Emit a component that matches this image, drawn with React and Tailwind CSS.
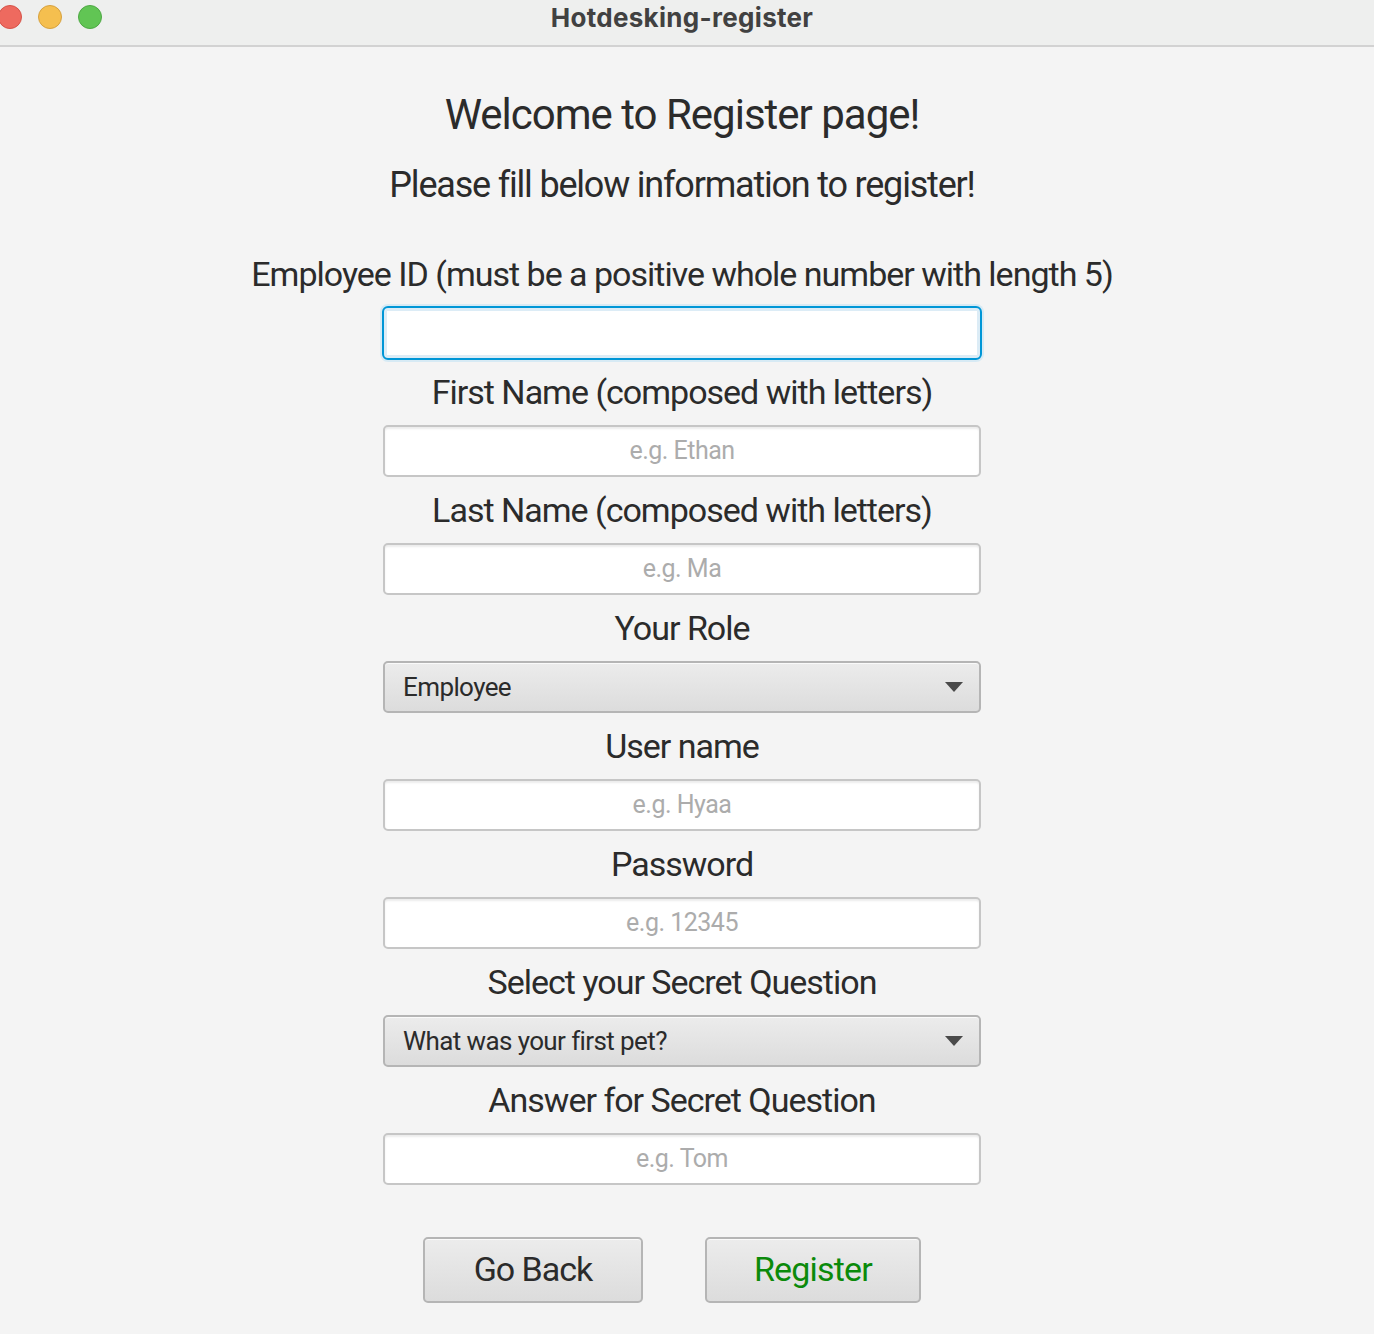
import React from "react";

const fields = [
  { label: "Employee ID (must be a positive whole number with length 5)", type: "input", focused: true },
  { label: "First Name (composed with letters)", type: "input", placeholder: "e.g. Ethan" },
  { label: "Last Name (composed with letters)", type: "input", placeholder: "e.g. Ma" },
  { label: "Your Role", type: "select", value: "Employee" },
  { label: "User name", type: "input", placeholder: "e.g. Hyaa" },
  { label: "Password", type: "input", placeholder: "e.g. 12345" },
  { label: "Select your Secret Question", type: "select", value: "What was your first pet?" },
  { label: "Answer for Secret Question", type: "input", placeholder: "e.g. Tom" },
];

const Field = ({ field }) => {
  if (field.type === "select") {
    return (
      <div className="w-[598px] h-[52px] flex items-center justify-between pl-[18px] pr-[16px] rounded-[5px] border-2 border-[#b5b5b5] bg-gradient-to-b from-[#ececec] to-[#dcdcdc] shadow-[inset_0_1px_0_#fafafa]">
        <span className="text-[26px] text-[#2b2b2b] tracking-[-0.6px]">{field.value}</span>
        <svg width="18" height="10" viewBox="0 0 18 10">
          <path d="M0 0 L18 0 L9 10 Z" fill="#4a4a4a" />
        </svg>
      </div>
    );
  }
  if (field.focused) {
    return (
      <div className="w-[600px] h-[54px] -my-[1px] rounded-[6px] border-2 border-[#0096d6] p-[3px] bg-[#dcecf6] shadow-[0_0_0_2px_#d7eaf4]">
        <div className="w-full h-full bg-white" />
      </div>
    );
  }
  return (
    <div className="w-[598px] h-[52px] flex items-center justify-center rounded-[5px] border-2 border-[#c6c6c6] bg-white shadow-[inset_0_2px_2px_#ececec]">
      <span className="text-[25px] text-[#acacac] tracking-[-0.5px] -mt-[1px]">{field.placeholder}</span>
    </div>
  );
};

const App = () => {
  return (
    <div className="w-[1374px] h-[1334px] bg-[#f4f4f4] font-['Roboto','Liberation_Sans',sans-serif] overflow-hidden">
      {/* title bar */}
      <div className="relative h-[47px] bg-[#eeefee] border-b-2 border-[#d2d2d2] flex items-center justify-center pr-[10px]">
        <div className="absolute left-[-2px] top-[5px] flex gap-[16px]">
          <div className="w-[24px] h-[24px] rounded-full bg-[#ee6a5f] border border-[#d65348]" />
          <div className="w-[24px] h-[24px] rounded-full bg-[#f5bf4f] border border-[#d6a13f]" />
          <div className="w-[24px] h-[24px] rounded-full bg-[#61c554] border border-[#4ea844]" />
        </div>
        <span className="text-[26px] font-bold text-[#414141] tracking-[0.3px] -mt-[10px] font-['Inter','Liberation_Sans',sans-serif]">
          Hotdesking-register
        </span>
      </div>

      <div className="flex flex-col items-center pr-[10px]">
        <h1 className="mt-[42px] h-[52px] text-[42px] leading-[52px] text-[#2b2b2b] tracking-[-1px]">
          Welcome to Register page!
        </h1>
        <p className="mt-[24px] h-[40px] text-[36px] leading-[40px] text-[#2b2b2b] tracking-[-1.2px]">
          Please fill below information to register!
        </p>

        <div className="mt-[36px] flex flex-col items-center">
          {fields.map((f, i) => (
            <div key={i} className="flex flex-col items-center">
              <div className="h-[66px] flex items-center text-[34px] text-[#2b2b2b] tracking-[-1px] whitespace-nowrap">
                {f.label}
              </div>
              <Field field={f} />
            </div>
          ))}
        </div>

        <div className="mt-[52px] mr-[20px] flex gap-[62px]">
          <button className="w-[220px] h-[66px] rounded-[5px] border-2 border-[#b5b5b5] bg-gradient-to-b from-[#ececec] to-[#dcdcdc] shadow-[inset_0_1px_0_#fafafa] text-[34px] text-[#2b2b2b] tracking-[-1px] pb-[2px]">
            Go Back
          </button>
          <button className="w-[216px] h-[66px] rounded-[5px] border-2 border-[#b5b5b5] bg-gradient-to-b from-[#ececec] to-[#dcdcdc] shadow-[inset_0_1px_0_#fafafa] text-[34px] text-[#0b8a0b] tracking-[-0.8px] pb-[2px]">
            Register
          </button>
        </div>
      </div>
    </div>
  );
};

export default App;
